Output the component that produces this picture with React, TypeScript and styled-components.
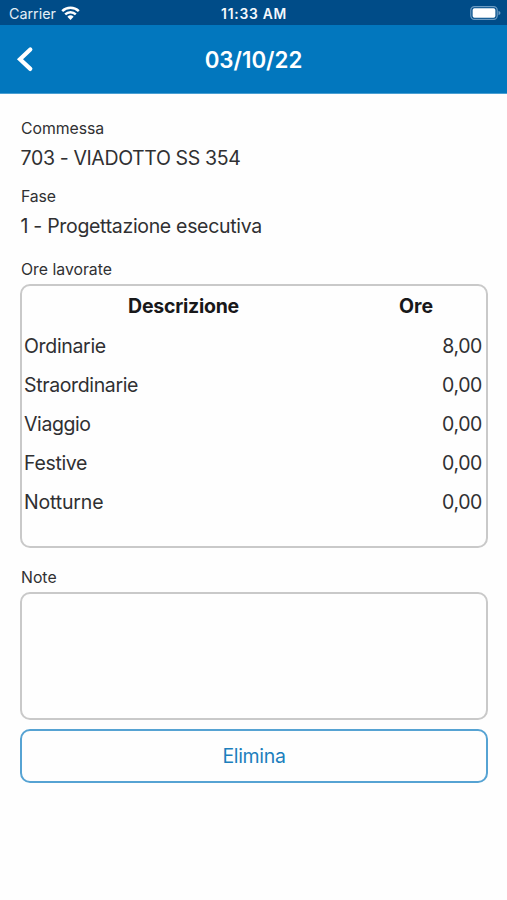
import React from "react";
import styled, { createGlobalStyle } from "styled-components";

const GlobalStyle = createGlobalStyle`
  *, *::before, *::after { box-sizing: border-box; }
  body { margin: 0; background: #fff; }
`;

const Screen = styled.div`
  display: flex;
  flex-direction: column;
  height: 900px;
  overflow: hidden;
  background: #fefefe;
  color: #303032;
  font-family: Inter, "Liberation Sans", sans-serif;
  font-size: 19.5px;
`;

const StatusBar = styled.div`
  display: grid;
  grid-template-columns: 1fr auto 1fr;
  align-items: center;
  height: 25px;
  padding: 3px 6px 0 9px;
  background: #004c88;
  color: #e4eef6;
  font-size: 14.3px;
  line-height: 22px;
`;

const Carrier = styled.div`
  display: flex;
  align-items: center;
  gap: 5px;
`;

const Clock = styled.span`
  color: #f4f9fd;
  font-size: 13.8px;
  font-weight: 600;
  letter-spacing: 0.75px;
  margin-right: 2px;
`;

const BatteryIcon = styled.svg`
  justify-self: end;
  margin-top: -2px;
`;

const WifiIcon = styled.svg`
  margin-top: -2px;
`;

const Header = styled.header`
  display: grid;
  grid-template-columns: 50px 1fr 50px;
  align-items: center;
  height: 69px;
  background: #0277be;
  border-bottom: 1px solid #4a9fd2;
`;

const BackButton = styled.button`
  display: flex;
  padding: 0 0 0 15px;
  border: 0;
  background: none;
`;

const Title = styled.h1`
  margin: 2px 0 0;
  color: #fff;
  font-size: 22.3px;
  font-weight: 600;
  line-height: 28px;
  text-align: center;
`;

const Content = styled.main`
  display: flex;
  flex-direction: column;
  padding: 23px 19px 0 20px;
`;

const Label = styled.div<{ $tracking?: number }>`
  height: 24px;
  padding-left: 1px;
  font-size: 15.8px;
  line-height: 24px;
  letter-spacing: ${({ $tracking = 0 }) => $tracking}px;
`;

const Field = styled.div<{ $gap: number }>`
  margin-bottom: ${({ $gap }) => $gap}px;
`;

const Value = styled.div<{ $tracking?: number }>`
  height: 36px;
  padding-left: 0.6px;
  line-height: 34px;
  letter-spacing: ${({ $tracking = 0 }) => $tracking}px;
`;

const HoursTable = styled.div`
  height: 264px;
  margin: 2px 0 18px;
  padding: 1px 4px 0 2px;
  border: 2px solid #c9c9c9;
  border-radius: 10px;
`;

const HeadRow = styled.div`
  display: grid;
  grid-template-columns: 319px 1fr;
  height: 40px;
  color: #18181a;
  font-weight: 700;
  line-height: 38px;
  text-align: center;
  letter-spacing: -0.25px;

  span + span {
    padding-left: 7px;
    letter-spacing: 0;
  }
`;

const Row = styled.div`
  display: flex;
  justify-content: space-between;
  height: 39px;
  line-height: 39px;
`;

const Cell = styled.span<{ $tracking?: number }>`
  letter-spacing: ${({ $tracking = 0 }) => $tracking}px;
`;

const NoteBox = styled.div`
  height: 128px;
  margin: 2px 0 9px;
  border: 2px solid #c9c9c9;
  border-radius: 10px;
`;

const DeleteButton = styled.button`
  height: 54px;
  padding: 0;
  border: 2px solid #56a3d3;
  border-radius: 10px;
  background: #fefefe;
  color: #1c7fbd;
  font: inherit;
  letter-spacing: -0.35px;
`;

const rows = [
  { name: "Ordinarie", hours: "8,00", tracking: -0.33 },
  { name: "Straordinarie", hours: "0,00", tracking: -0.36 },
  { name: "Viaggio", hours: "0,00", tracking: -0.4 },
  { name: "Festive", hours: "0,00", tracking: -0.33 },
  { name: "Notturne", hours: "0,00", tracking: -0.17 },
];

export default function App() {
  return (
    <Screen>
      <GlobalStyle />
      <StatusBar>
        <Carrier>
          <span>Carrier</span>
          <WifiIcon width="19" height="14" viewBox="0 0 19 14" fill="none" stroke="#fff" strokeWidth="2.5">
            <path d="M1.2 5.1a12 12 0 0 1 16.6 0" />
            <path d="M4.2 8.3a7.6 7.6 0 0 1 10.6 0" />
            <path d="M9.5 13.9 6.4 10.8a4.5 4.5 0 0 1 6.2 0Z" fill="#fff" stroke="none" />
          </WifiIcon>
        </Carrier>
        <Clock>11:33 AM</Clock>
        <BatteryIcon width="31" height="14" viewBox="0 0 31 14">
          <rect x="0.8" y="0.6" width="26.4" height="12.8" rx="3.6" fill="none" stroke="#6c9cc3" strokeWidth="1.2" />
          <rect x="2.6" y="2.3" width="22.8" height="9.4" rx="1.8" fill="#fff" />
          <path d="M28.5 4.8Q30.5 5.6 30.5 7T28.5 9.2Z" fill="#6c9cc3" />
        </BatteryIcon>
      </StatusBar>
      <Header>
        <BackButton aria-label="Indietro">
          <svg width="20" height="26" viewBox="0 0 20 26" fill="none" stroke="#fff" strokeWidth="4.2">
            <path d="M15.300 3.500 5 13.200 15.300 22.900" strokeLinecap="round" />
          </svg>
        </BackButton>
        <Title>03/10/22</Title>
      </Header>
      <Content>
        <Field $gap={8}>
          <Label $tracking={-0.05}>Commessa</Label>
          <Value $tracking={-0.37}>703 - VIADOTTO SS 354</Value>
        </Field>
        <Field $gap={13}>
          <Label $tracking={-0.1}>Fase</Label>
          <Value $tracking={-0.32}>1 - Progettazione esecutiva</Value>
        </Field>
        <Label>Ore lavorate</Label>
        <HoursTable>
          <HeadRow>
            <span>Descrizione</span>
            <span>Ore</span>
          </HeadRow>
          {rows.map((row) => (
            <Row key={row.name}>
              <Cell $tracking={row.tracking}>{row.name}</Cell>
              <Cell $tracking={-0.4}>{row.hours}</Cell>
            </Row>
          ))}
        </HoursTable>
        <Label>Note</Label>
        <NoteBox />
        <DeleteButton>Elimina</DeleteButton>
      </Content>
    </Screen>
  );
}
